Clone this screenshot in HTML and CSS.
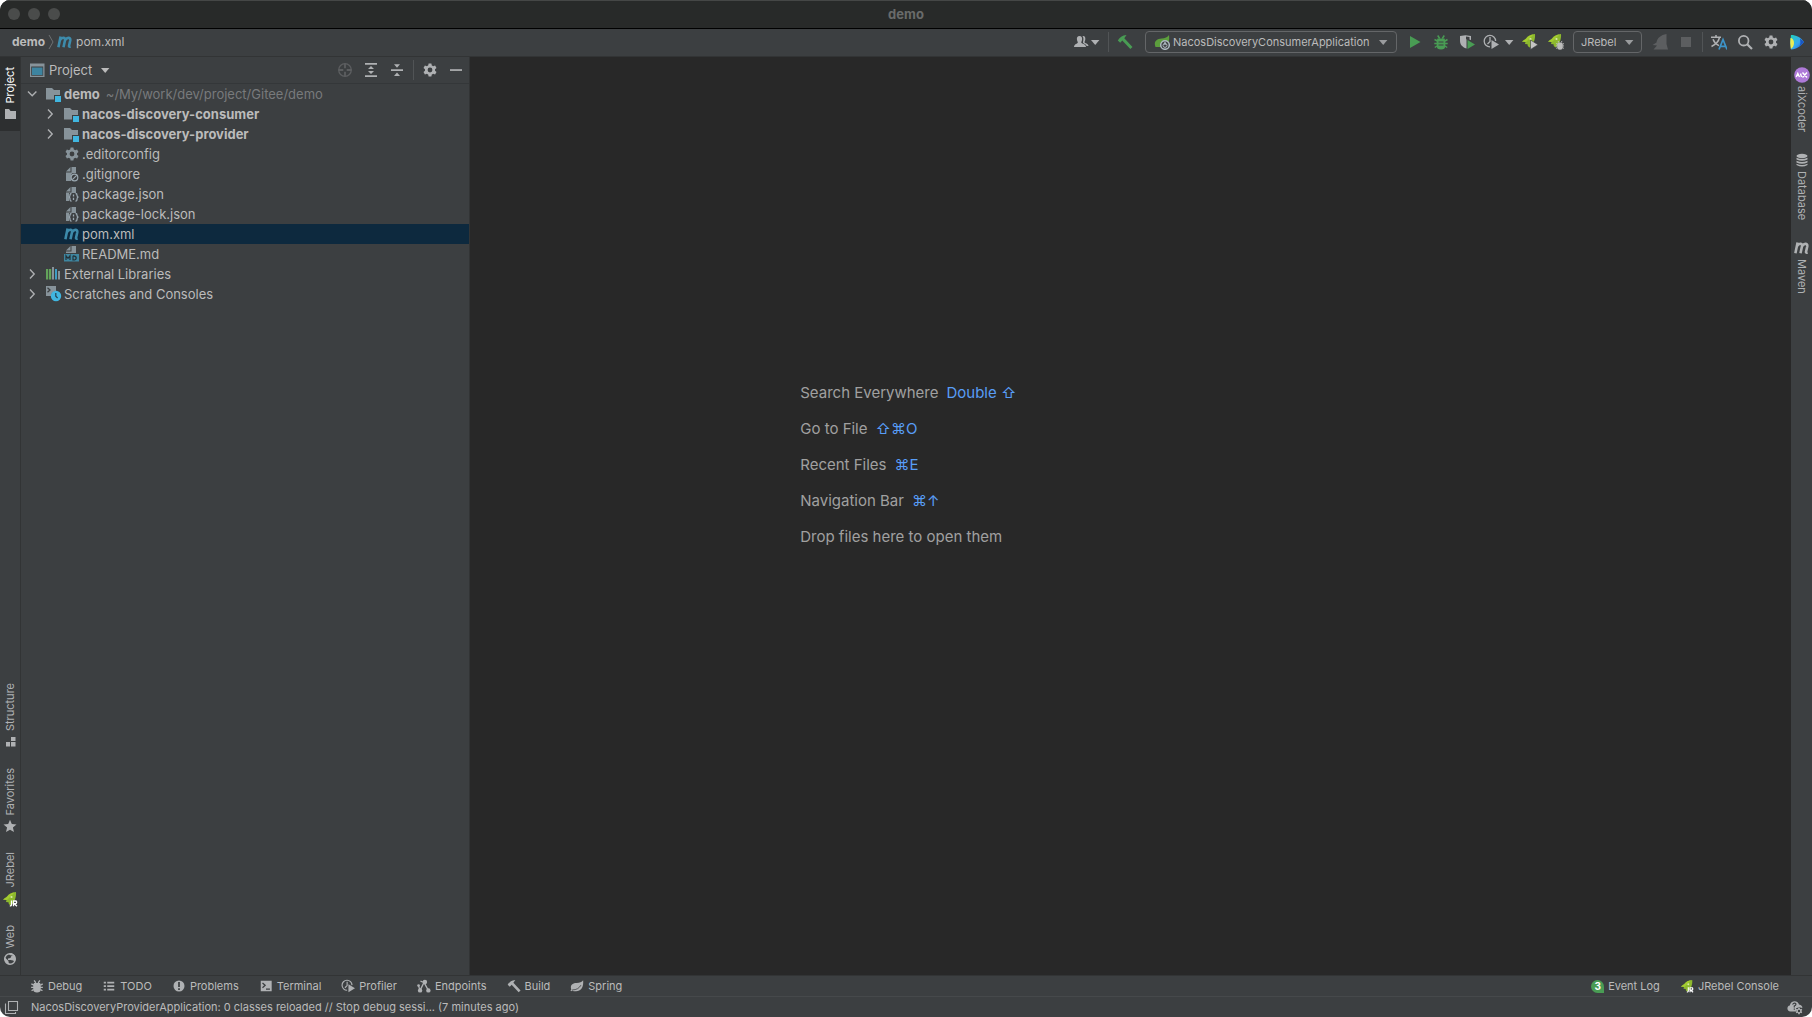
FILE: index.html
```html
<!DOCTYPE html>
<html lang="en">
<head>
    <meta charset="UTF-8">
    <title>demo</title>
    <link rel="stylesheet" href="styles.css">
</head>
<body>
<!-- icon sprite -->
<svg class="sprite" aria-hidden="true">
    <symbol id="caret" viewBox="0 0 10 16"><path fill="currentColor" d="M1 6h8.400L5.200 11z"/></symbol>
    <symbol id="right" viewBox="0 0 16 16"><path fill="none" stroke="currentColor" stroke-width="1.400" d="M6 3.500L10.200 8 6 12.500"/></symbol>
    <symbol id="down" viewBox="0 0 16 16"><path fill="none" stroke="currentColor" stroke-width="1.400" d="M4 5.500L8.200 9.700l4.200-4.200"/></symbol>
    <symbol id="maven" viewBox="0 0 16 16"><path fill="none" stroke="currentColor" stroke-width="2.600" d="M3.600 2.500L1.400 13.200M3 6.200C4.600 3.300 8.600 2.700 8 6.200L6.500 13.200M7.800 6.600C9.400 3.300 13.900 2.700 13.300 6.200L12 12q-.2 1 1.600.5"/></symbol>
    <symbol id="window" viewBox="0 0 16 16"><path fill="#87939a" d="M1 1.500h14.500v13.500H1z"/><path fill="#3c3f41" d="M2.200 4.500h12v9.300h-12z"/><path fill="#3d84a0" d="M3 5.500h10.500V13H3z"/></symbol>
    <symbol id="module" viewBox="0 0 16 16"><path fill="#87939a" d="M0 2h6l2 2h6v5H8v4.500H0z"/><path fill="#40b6e0" d="M9 10h6v6H9z"/></symbol>
    <symbol id="folder" viewBox="0 0 16 16"><path fill="currentColor" d="M3 2h4l1.500 2H14v8H3z"/></symbol>
    <symbol id="gear" viewBox="0 0 16 16">
        <path fill="currentColor" fill-rule="evenodd" d="M6.600 1.500h2.800l.4 2a5 5 0 0 1 1.300.8l2-.7 1.400 2.400L13 7.300a5 5 0 0 1 0 1.400l1.500 1.300-1.400 2.400-2-.7a5 5 0 0 1-1.300.8l-.4 2H6.600l-.4-2a5 5 0 0 1-1.300-.8l-2 .7L1.500 10 3 8.700a5 5 0 0 1 0-1.400L1.500 6l1.400-2.400 2 .7a5 5 0 0 1 1.300-.8zM8 5.600a2.400 2.400 0 1 0 0 4.800 2.400 2.400 0 0 0 0-4.800z"/>
    </symbol>
    <symbol id="page" viewBox="0 0 16 16"><path fill="#87939a" d="M7.500 1H12v6H8.500L7 9v6H2V6.500h5.500zM6.500 1v4.500H2z"/></symbol>
    <symbol id="gitignore" viewBox="0 0 16 16"><use href="#page"/><circle cx="10.500" cy="11.500" r="3.300" fill="#3c3f41" stroke="#9aa7b0" stroke-width="1.200"/><path stroke="#9aa7b0" stroke-width="1.200" d="M8.300 13.700l4.400-4.400"/></symbol>
    <symbol id="json" viewBox="0 0 16 16"><use href="#page"/><path fill="#3c3f41" d="M5 7h10v9H5z"/><path fill="none" stroke="#9aa7b0" stroke-width="1.300" d="M7.500 7.500q-1.500 0-1.500 1.700T4.500 11.200q1.500 0 1.500 2t1.500 1.800M11.500 7.500q1.500 0 1.500 1.700t1.500 2q-1.500 0-1.500 2T11.500 15M9.500 8.500v2M9.500 11.800v2.200"/><path fill="#87939a" d="M2 7h2.800v8H2z"/></symbol>
    <symbol id="markdown" viewBox="0 0 16 16"><path fill="#87939a" d="M7.500 0H12v7H2V5.500h5.500zM6.500 0v4.500H2z"/><path fill="#3e86a0" d="M0 8h15v7.500H0z"/><path fill="none" stroke="#24333a" stroke-width="1.200" d="M2 14V9.800l2 2.500 2-2.500V14M9 9.800V14c4.300 0 4.300-4.200 0-4.200"/></symbol>
    <symbol id="libs" viewBox="0 0 16 16"><path fill="#62a35a" d="M0 3h2.200v10.500H0zM3 3h2.200v10.500H3z"/><path fill="#87939a" d="M6 1h2v12.500H6z"/><path fill="#3f9dc4" d="M9 3h2v10.500H9z"/><path fill="#87939a" d="M12 5h2v8.500h-2z"/></symbol>
    <symbol id="scratch" viewBox="0 0 16 16"><path fill="#87939a" d="M0 0h10v5L6 7l-1 3H0z"/><path fill="none" stroke="#3c3f41" stroke-width="1.300" d="M1.500 1.800L4 4 1.500 6.200"/><circle cx="10" cy="10" r="5.200" fill="#40b6e0"/><path fill="none" stroke="#254250" stroke-width="1.200" d="M9.800 7v3.300l1.800 1.700"/></symbol>
    <symbol id="target" viewBox="0 0 16 16"><circle cx="8" cy="8" r="6.300" fill="none" stroke="currentColor" stroke-width="1.300"/><path stroke="currentColor" stroke-width="1.800" d="M8 1.500v4.800M8 9.700v4.800M1.500 8h4.800M9.700 8h4.800"/></symbol>
    <symbol id="expand" viewBox="0 0 16 16"><path fill="currentColor" d="M2 1h12v1.800H2zM2 13.200h12V15H2zM8 4l3 3H5zM8 12l3-3H5z"/></symbol>
    <symbol id="collapse" viewBox="0 0 16 16"><path fill="currentColor" d="M2 7.200h12v1.700H2zM8 5.700l3-3.500H5zM8 10.500l3 3.500H5z"/></symbol>
    <symbol id="minus" viewBox="0 0 16 16"><path fill="currentColor" d="M2 7.200h12v1.700H2z"/></symbol>
    <symbol id="user" viewBox="0 0 16 16"><path fill="currentColor" d="M6.500 2c2 0 2.800 1.400 2.600 3.300-.1 1.500-.8 2.500-.8 3.200 0 1.300 4.700 1.300 4.700 4.500H1c0-3.200 3.800-3.200 3.800-4.500 0-.7-.8-1.700-.9-3.200C3.700 3.400 4.500 2 6.500 2z"/><path fill="currentColor" d="M9.500 2c2.500-.3 3 1.500 2.800 3.300-.1 1.500-.7 2.200-.7 2.900 0 1.200 3.900 1 3.900 3.800h-1.900c-.5-2.200-3.600-2.400-3.600-3.600 0-1 1.200-4-.5-6.400z"/></symbol>
    <symbol id="hammer" viewBox="0 0 16 16"><path fill="currentColor" d="M.800 6.500C2.500 3.500 5.200 1.200 9.500 1L7.300 4.200 15.500 13 13.300 15 5.300 6.600 3.200 8.800z"/></symbol>
    <symbol id="leaf" viewBox="0 0 16 16"><path fill="currentColor" d="M15 1.500c.7 7.500-2 12.500-8 12.500-2 0-3.300-.3-4.300-1L1.300 14l-.8-.9 1-.9C-.3 7.500 2.500 4.700 7.500 4.500 11 4.300 13.500 3.700 15 1.500z"/><path fill="none" stroke="#3c3f41" stroke-width=".9" d="M2.500 12.500c5 0 8-2 10-5.500"/></symbol>
    <symbol id="springapp" viewBox="0 0 16 16"><path fill="#5c9e3d" d="M15 1c.5 4 0 7-1 8L7 13H1.500C-.500 8 2 5 7.500 4.500 11 4.200 13.500 3.500 15 1z"/><circle cx="11" cy="11" r="4.300" fill="#3c3f41" stroke="#aeb9c0" stroke-width="1.500"/><circle cx="11" cy="11.400" r="2" fill="none" stroke="#aeb9c0"/><path stroke="#aeb9c0" stroke-width="1.400" d="M11 8v3"/></symbol>
    <symbol id="play" viewBox="0 0 16 16"><path fill="#499c54" d="M3 2l10.500 6L3 14z"/></symbol>
    <symbol id="bug" viewBox="0 0 16 16"><path fill="currentColor" d="M4.500 4.500h7l.8 2v5.500a4.300 3.500 0 0 1-8.600 0V6.500z"/><path fill="none" stroke="currentColor" stroke-width="1.500" d="M1.500 5.500l3 1.500M14.500 5.500L12 7M1.300 9.500h13.400M1.800 13.500L4 12M14.200 13.500L12 12M4.700 1.500l2 3M11.300 1.500l-2 3"/></symbol>
    <symbol id="greenbug" viewBox="0 0 16 16"><use href="#bug"/><path stroke="#3c3f41" d="M5.500 8h5M5.500 11h5"/></symbol>
    <symbol id="coverage" viewBox="0 0 16 16"><path fill="#afb1b3" d="M1 2l5.500-.8L12 2v4L7.500 5v9.500C3 13 1 10.500 1 6.500z"/><path fill="#3c3f41" d="M7 2.500l3.500.6V7L7 5z"/><path fill="#499c54" d="M8.500 6L16 10.500 8.500 15z"/></symbol>
    <symbol id="profile" viewBox="0 0 16 16"><path fill="none" stroke="#afb1b3" stroke-width="1.300" d="M7 12.800A5.700 5.700 0 1 1 12.600 7M7 3v4.500L4.500 10"/><path class="go" d="M8.500 6L16 10.500 8.500 15z"/></symbol>
    <symbol id="rocket" viewBox="0 0 16 16"><path fill="#8db92e" d="M14 1C9.500 1.300 6.500 3 5 5.500L1 8.500l3.500.5-.5 2 2.500.3.300 1.700 1.700 1.500C12.500 12 14.500 6 14 1z"/><path fill="#a5cc30" d="M12.500 1.500C9.500 2 6.500 3.500 5 6L1 8.500l4 .5z"/><circle cx="9.500" cy="6" r="1.100" fill="#d8e8a8"/></symbol>
    <symbol id="rocketrun" viewBox="0 0 16 16"><use href="#rocket" x="-1" y="-1"/><path fill="#c4c4c4" stroke="#3c3f41" stroke-width=".600" d="M8.500 6l7.500 4.700-7.500 4.800z"/></symbol>
    <symbol id="rocketbug" viewBox="0 0 16 16"><use href="#rocket" x="-1" y="-1"/><g color="#bcbcbc"><use href="#bug" x="7" y="6" width="10" height="10"/></g></symbol>
    <symbol id="jr" viewBox="0 0 16 16"><use href="#rocket"/><path fill="none" stroke="#fff" stroke-width="1.300" d="M9.500 9.500v4.300q0 1.200-1.700 1M11.500 15.200V10H14q1.200 1.300 0 2.700h-2l3 2.500"/></symbol>
    <symbol id="grayrocket" viewBox="0 0 16 16"><path fill="currentColor" d="M14.500 0v10l1.500 5.500H1.500L5 11.500.500 11l4-2.500C5 4 9 1 14.500 0z"/></symbol>
    <symbol id="stop" viewBox="0 0 16 16"><path fill="currentColor" d="M3 3h10v10H3z"/></symbol>
    <symbol id="translate" viewBox="0 0 16 16"><path fill="none" stroke="#afb1b3" stroke-width="1.500" d="M0 3.200h10M5 1v2M2 5.200c1.500 4 4 5.500 6 6.500M8.500 3.500C7.500 8 4.500 10.500.500 12.500"/><path fill="none" stroke="#3d94c9" stroke-width="1.700" d="M8 15.500L12 5.500l4 10M9.500 12.300h5"/></symbol>
    <symbol id="search" viewBox="0 0 16 16"><circle cx="6.700" cy="6.700" r="4.800" fill="none" stroke="currentColor" stroke-width="1.800"/><path stroke="currentColor" stroke-width="2.200" d="M10 10l5 5"/></symbol>
    <symbol id="box" viewBox="0 0 16 16">
        <linearGradient id="boxfill" x1="0" x2="1" y1="0" y2="1"><stop offset="0" stop-color="#20d0b8"/><stop offset=".550" stop-color="#35a8f0"/><stop offset="1" stop-color="#1557d0"/></linearGradient>
        <path fill="url(#boxfill)" d="M2 1c5 0 10 2.500 13 7-3 4-7 7-13 7.500Q.500 8 2 1z"/><path fill="#e9ed56" d="M1.500 4c2 0 3.500 2 3.500 5s-1.500 5-3.200 6Q.800 9 1.500 4z"/><path fill="#1b55c2" d="M11 4.500L15 8l-4.500 4.500q1.500-4 .5-8z"/>
    </symbol>
    <symbol id="structure" viewBox="0 0 16 16"><path fill="currentColor" d="M9 3h4.500v4H9zM4 8h4v4.500H4zM9 8h4.500v4.500H9z"/></symbol>
    <symbol id="star" viewBox="0 0 16 16"><path fill="currentColor" d="M8 1.800l1.800 4.300 4.700.4-3.600 3 1.100 4.600L8 11.700l-4 2.400 1.100-4.600-3.600-3 4.700-.4z"/></symbol>
    <symbol id="web" viewBox="0 0 16 16"><circle cx="8" cy="8" r="5.300" fill="none" stroke="currentColor" stroke-width="1.400"/><path fill="currentColor" d="M2.500 6l4 4v1.300l1 1.500v1L4 12 2.500 8.500zM6.500 3l3-1 3.500 2.500.5 4-1 2.500-1.300-1.500L8.500 9H6V7.500l2.500-.5.5-1.500 2-1.500-2 .5z"/></symbol>
    <symbol id="ai" viewBox="0 0 16 16"><circle cx="8" cy="8" r="7.800" fill="#ae7ad8"/><path fill="none" stroke="#fff" stroke-width="1.400" d="M2.200 10l1.600-3.500L5.500 10M6.500 6.500L7.500 10M8.500 5.500l4.500 5M13 5.500l-4.500 5"/></symbol>
    <symbol id="database" viewBox="0 0 16 16"><g fill="currentColor"><ellipse cx="8" cy="4" rx="5.500" ry="2.200"/><path d="M2.500 5.800q5.500 2.600 11 0v1.700q-5.500 2.600-11 0zM2.500 8.800q5.500 2.600 11 0v1.700q-5.500 2.600-11 0zM2.500 11.800q5.500 2.600 11 0v1.200q-5.500 3-11 0z"/></g></symbol>
    <symbol id="list" viewBox="0 0 16 16"><path fill="currentColor" d="M2 3h2.500v2H2zM6 3h8v2H6zM2 7h2.500v2H2zM6 7h8v2H6zM2 11h2.500v2H2zM6 11h8v2H6z"/></symbol>
    <symbol id="problem" viewBox="0 0 16 16"><circle cx="8" cy="8" r="6.300" fill="currentColor"/><path fill="#3c3f41" d="M7 3.500h2v5.500H7zM7 10.500h2v2H7z"/></symbol>
    <symbol id="terminal" viewBox="0 0 16 16"><path fill="currentColor" d="M2 2h12.500v12H2z"/><path fill="none" stroke="#3c3f41" stroke-width="1.500" d="M4 4.500l3 2.700L4 10M8 11.500h4.500"/></symbol>
    <symbol id="endpoints" viewBox="0 0 16 16"><path fill="none" stroke="currentColor" stroke-width="1.500" d="M3.500 13l-2-6M3.500 13L8 4l5 9M4 2.500l4 1.500"/><g fill="currentColor"><circle cx="3.500" cy="13" r="2.500"/><circle cx="13" cy="13" r="2.500"/><circle cx="9" cy="3.500" r="2.600"/><circle cx="1.800" cy="7.500" r="1.500"/></g></symbol>
    <symbol id="frames" viewBox="0 0 16 16"><path fill="none" stroke="currentColor" stroke-width="1.100" d="M4.500 2.500h9v9h-9zM2 5H1.500v9.500h10V13"/></symbol>
    <symbol id="cloud" viewBox="0 0 16 16"><path fill="currentColor" d="M3.500 12.500C-.500 12.300-.500 7 2.800 6.500 3.500 1.500 10.500.500 12 5.500c2.500.3 3.500 2 3.300 3.500l-3-.8-3.300 1v3.300z"/><path fill="none" stroke="#3c3f41" stroke-width="1.200" d="M5.500 5.500q2-2.500 3.500-.5 0 1.200-1.700 2v1.500M7.300 9.500v1.200"/><use href="#gear" x="8" y="8" width="8" height="8"/></symbol>
</svg>

<div class="window">
    <header class="titlebar">
        <span class="lights"><i></i><i></i><i></i></span>
        <h1>demo</h1>
    </header>

    <div class="toolbar">
        <nav class="crumbs">
            <a href="#" class="root">demo</a>
            <svg class="crumb-arrow" viewBox="0 0 6 16"><path fill="none" stroke="#6e7173" d="M1 1l4 7-4 7"/></svg>
            <svg class="icon blue"><use href="#maven"/></svg>
            <a href="#">pom.xml</a>
        </nav>
        <button class="tool drop" aria-label="User"><svg class="icon"><use href="#user"/></svg><svg class="caret"><use href="#caret"/></svg></button>
        <span class="sep"></span>
        <button class="tool green" aria-label="Build"><svg class="icon"><use href="#hammer"/></svg></button>
        <label class="combo config">
            <svg class="icon"><use href="#springapp"/></svg>
            <select aria-label="Run configuration"><option>NacosDiscoveryConsumerApplication</option></select>
            <svg class="caret"><use href="#caret"/></svg>
        </label>
        <button class="tool" aria-label="Run"><svg class="icon"><use href="#play"/></svg></button>
        <button class="tool green" aria-label="Debug"><svg class="icon"><use href="#greenbug"/></svg></button>
        <button class="tool" aria-label="Coverage"><svg class="icon"><use href="#coverage"/></svg></button>
        <button class="tool drop profile" aria-label="Profile"><svg class="icon"><use href="#profile"/></svg><svg class="caret"><use href="#caret"/></svg></button>
        <button class="tool" aria-label="Run with JRebel"><svg class="icon"><use href="#rocketrun"/></svg></button>
        <button class="tool" aria-label="Debug with JRebel"><svg class="icon"><use href="#rocketbug"/></svg></button>
        <label class="combo">
            <select aria-label="JRebel"><option>JRebel</option></select>
            <svg class="caret"><use href="#caret"/></svg>
        </label>
        <button class="tool off" aria-label="Update" disabled><svg class="icon"><use href="#grayrocket"/></svg></button>
        <button class="tool off" aria-label="Stop" disabled><svg class="icon"><use href="#stop"/></svg></button>
        <span class="sep"></span>
        <button class="tool" aria-label="Translate"><svg class="icon"><use href="#translate"/></svg></button>
        <button class="tool" aria-label="Search"><svg class="icon"><use href="#search"/></svg></button>
        <button class="tool" aria-label="Settings"><svg class="icon"><use href="#gear"/></svg></button>
        <button class="tool" aria-label="Toolbox"><svg class="icon"><use href="#box"/></svg></button>
    </div>

    <main class="main">
        <div class="stripe left">
            <button class="current"><span>Project</span><svg class="icon"><use href="#folder"/></svg></button>
            <button class="push"><span>Structure</span><svg class="icon"><use href="#structure"/></svg></button>
            <button><span>Favorites</span><svg class="icon"><use href="#star"/></svg></button>
            <button><span>JRebel</span><svg class="icon"><use href="#jr"/></svg></button>
            <button><span>Web</span><svg class="icon"><use href="#web"/></svg></button>
        </div>

        <section class="project">
            <div class="project-head">
                <button class="view"><svg class="icon"><use href="#window"/></svg>Project<svg class="caret"><use href="#caret"/></svg></button>
                <button class="tool off" aria-label="Select opened file" disabled><svg class="icon"><use href="#target"/></svg></button>
                <button class="tool" aria-label="Expand all"><svg class="icon"><use href="#expand"/></svg></button>
                <button class="tool" aria-label="Collapse all"><svg class="icon"><use href="#collapse"/></svg></button>
                <span class="sep"></span>
                <button class="tool" aria-label="Options"><svg class="icon"><use href="#gear"/></svg></button>
                <button class="tool" aria-label="Hide"><svg class="icon"><use href="#minus"/></svg></button>
            </div>
            <ul class="tree">
                <li><svg class="icon arrow"><use href="#down"/></svg><svg class="icon"><use href="#module"/></svg><b>demo</b><span class="path">~/My/work/dev/project/Gitee/demo</span></li>
                <li class="sub"><svg class="icon arrow"><use href="#right"/></svg><svg class="icon"><use href="#module"/></svg><b>nacos-discovery-consumer</b></li>
                <li class="sub"><svg class="icon arrow"><use href="#right"/></svg><svg class="icon"><use href="#module"/></svg><b>nacos-discovery-provider</b></li>
                <li class="sub file"><svg class="icon steel"><use href="#gear"/></svg>.editorconfig</li>
                <li class="sub file"><svg class="icon"><use href="#gitignore"/></svg>.gitignore</li>
                <li class="sub file"><svg class="icon"><use href="#json"/></svg>package.json</li>
                <li class="sub file"><svg class="icon"><use href="#json"/></svg>package-lock.json</li>
                <li class="sub file selected"><svg class="icon blue"><use href="#maven"/></svg>pom.xml</li>
                <li class="sub file"><svg class="icon"><use href="#markdown"/></svg>README.md</li>
                <li><svg class="icon arrow"><use href="#right"/></svg><svg class="icon"><use href="#libs"/></svg>External Libraries</li>
                <li><svg class="icon arrow"><use href="#right"/></svg><svg class="icon"><use href="#scratch"/></svg>Scratches and Consoles</li>
            </ul>
        </section>

        <section class="editor">
            <ul class="hints">
                <li>Search Everywhere<kbd>Double ⇧</kbd></li>
                <li>Go to File<kbd>⇧⌘O</kbd></li>
                <li>Recent Files<kbd>⌘E</kbd></li>
                <li>Navigation Bar<kbd>⌘↑</kbd></li>
                <li>Drop files here to open them</li>
            </ul>
        </section>

        <div class="stripe right">
            <button><svg class="icon"><use href="#ai"/></svg><span>aiXcoder</span></button>
            <button><svg class="icon"><use href="#database"/></svg><span>Database</span></button>
            <button><svg class="icon"><use href="#maven"/></svg><span>Maven</span></button>
        </div>
    </main>

    <div class="bottombar">
        <button><svg class="icon"><use href="#bug"/></svg>Debug</button>
        <button><svg class="icon"><use href="#list"/></svg>TODO</button>
        <button><svg class="icon"><use href="#problem"/></svg>Problems</button>
        <button><svg class="icon"><use href="#terminal"/></svg>Terminal</button>
        <button><svg class="icon"><use href="#profile"/></svg>Profiler</button>
        <button><svg class="icon"><use href="#endpoints"/></svg>Endpoints</button>
        <button><svg class="icon"><use href="#hammer"/></svg>Build</button>
        <button><svg class="icon"><use href="#leaf"/></svg>Spring</button>
        <button class="push"><span class="count">3</span>Event Log</button>
        <button><svg class="icon"><use href="#jr"/></svg>JRebel Console</button>
    </div>

    <footer class="status">
        <button class="tool" aria-label="Tool windows"><svg class="icon"><use href="#frames"/></svg></button>
        <p>NacosDiscoveryProviderApplication: 0 classes reloaded // Stop debug sessi... (7 minutes ago)</p>
        <button class="tool" aria-label="Sync settings"><svg class="icon"><use href="#cloud"/></svg></button>
    </footer>
</div>
</body>
</html>
```
FILE: styles.css
```css
*{
    margin: 0;
    padding: 0;
    box-sizing: border-box;
    list-style: none;
}
body{
    background-color: #fff;
    color: #bbb;
    font: 13px/20px Inter, "Liberation Sans", sans-serif;
}
button, select{
    border: 0;
    background: none;
    color: inherit;
    font: inherit;
}
a{
    color: inherit;
    text-decoration: none;
}
.sprite{
    position: absolute;
    width: 0;
    height: 0;
}
.icon{
    display: block;
    flex: none;
    width: 16px;
    height: 16px;
}
.caret{
    flex: none;
    width: 10px;
    height: 16px;
}
.blue{
    color: #3d8bab;
}
.green{
    color: #499c54;
}
.steel{
    color: #87939a;
}
.go{
    fill: #afb1b3;
}
.profile .go{
    fill: #499c54;
}
.push{
    margin-left: auto;
}

.window{
    display: flex;
    flex-direction: column;
    height: 100vh;
    border-radius: 10px;
    overflow: hidden;
    background-color: #3c3f41;
}

/* title bar */
.titlebar{
    display: grid;
    grid-template-columns: 1fr auto 1fr;
    align-items: center;
    height: 29px;
    padding: 0 8px 1px;
    background-color: #282a29;
    border-top: 1px solid #454746;
    border-bottom: 1px solid #000;
}
.titlebar h1{
    font-size: 13px;
    color: #696b6a;
}
.lights{
    display: flex;
    gap: 8px;
}
.lights i{
    width: 12px;
    height: 12px;
    border-radius: 50%;
    background-color: #4a4c4b;
}

/* navigation bar */
.toolbar{
    display: flex;
    align-items: center;
    gap: 10px;
    height: 28px;
    padding: 0 7px 1px 12px;
    border-bottom: 1px solid #323435;
}
.crumbs{
    display: flex;
    align-items: center;
    gap: 3px;
    margin-right: auto;
    font-size: 12px;
}
.root{
    font-weight: bold;
}
.crumb-arrow{
    width: 6px;
    height: 16px;
}
.tool{
    display: flex;
    align-items: center;
    color: #afb1b3;
}
.tool.green{
    color: #499c54;
}
.tool.off{
    color: #5c5e60;
}
.drop{
    gap: 1px;
}
.profile{
    gap: 5px;
    margin: 0 -2px;
}
.sep{
    width: 1px;
    height: 20px;
    margin: 0 -2px;
    background-color: #515456;
}
.combo{
    display: flex;
    align-items: center;
    height: 22px;
    margin-left: -1px;
    padding: 0 7px;
    gap: 7px;
    border: 1px solid #646668;
    border-radius: 4px;
    font-size: 11px;
}
.combo.config{
    margin-left: 2px;
    padding: 0 8px;
    gap: 8px;
}
.combo .icon{
    margin-right: -5px;
}
.combo select{
    appearance: none;
    outline: none;
}
.combo .caret{
    color: #9a9c9e;
}

/* tool window stripes */
.main{
    display: flex;
    flex: 1;
    min-height: 0;
}
.stripe{
    display: flex;
    flex-direction: column;
    width: 21px;
    font-size: 11px;
    line-height: 16px;
}
.stripe.left{
    border-right: 1px solid #323435;
}
.stripe button{
    display: flex;
    flex-direction: column;
    align-items: center;
    gap: 3px;
    padding: 10px 0 8px;
    color: #afb1b3;
}
.stripe.right button{
    padding: 10px 0;
}
.stripe span{
    writing-mode: vertical-rl;
}
.stripe.left span{
    transform: rotate(180deg);
}
.stripe .push{
    margin: auto 0 0;
}
.stripe .current{
    background-color: #2d2f30;
}
.stripe .current span{
    color: #fff;
}

/* project tree */
.project{
    width: 449px;
    border-right: 1px solid #323435;
}
.project-head{
    display: flex;
    align-items: center;
    gap: 10px;
    height: 27px;
    padding: 0 5px 0 8px;
    border-bottom: 1px solid #343739;
}
.view{
    display: flex;
    align-items: center;
    gap: 4px;
    margin-right: auto;
}
.view .caret{
    margin-left: 4px;
}
.tree li{
    display: flex;
    align-items: center;
    gap: 2px;
    height: 20px;
    padding-left: 3px;
}
.tree .sub{
    padding-left: 21px;
}
.tree .file{
    padding-left: 43px;
}
.arrow{
    margin-right: 4px;
    color: #adafb1;
}
.path{
    margin-left: 4px;
    color: #787a7c;
}
.tree .selected{
    background-color: #0d293e;
}

/* empty editor */
.editor{
    display: flex;
    flex-direction: column;
    flex: 1;
    background-color: #282828;
}
.editor::before{
    content: "";
    flex: 3;
}
.editor::after{
    content: "";
    flex: 4;
}
.hints{
    padding: 3px 0 0 25%;
    color: #a0a0a0;
    font-size: 15px;
    line-height: 36px;
}
.hints kbd{
    margin-left: 8px;
    color: #589df6;
    font-family: inherit;
    font-size: 15px;
}

/* bottom bars */
.bottombar{
    display: flex;
    align-items: center;
    height: 21px;
    padding: 0 23px 0 20px;
    border-top: 1px solid #323435;
    font-size: 11px;
}
.bottombar button{
    display: flex;
    align-items: center;
    gap: 4px;
    padding: 0 10px;
}
.bottombar .icon{
    width: 14px;
    height: 14px;
    color: #afb1b3;
}
.count{
    width: 13px;
    height: 13px;
    border-radius: 7px 7px 0 7px;
    background-color: #499c54;
    color: #fff;
    font-size: 10px;
    font-weight: bold;
    line-height: 13px;
}
.status{
    display: flex;
    align-items: center;
    height: 21px;
    padding: 0 9px 0 4px;
    border-top: 1px solid #46494b;
    font-size: 11px;
}
.status p{
    flex: 1;
    padding-left: 11px;
}
```
